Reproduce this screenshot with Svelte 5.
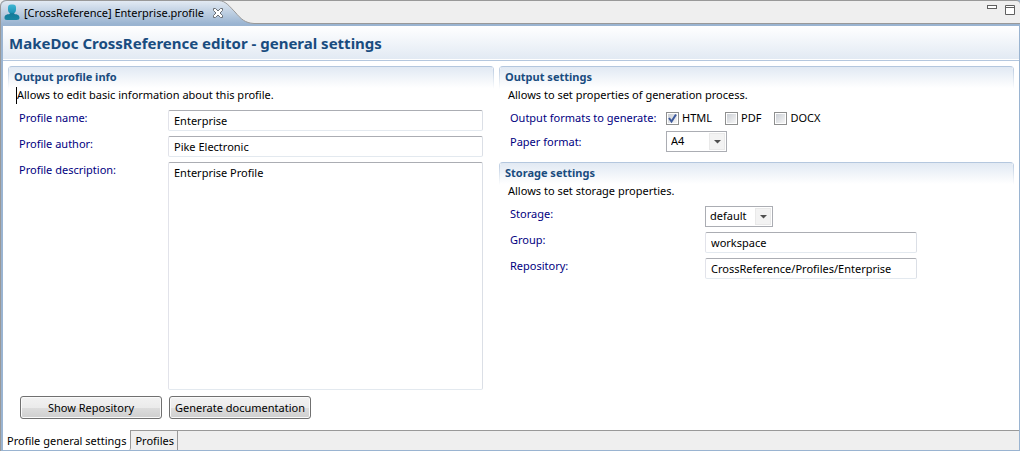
<script>
  let name = $state('Enterprise');
  let author = $state('Pike Electronic');
  let description = $state('Enterprise Profile');
  let formats = $state([
    { label: 'HTML', on: true },
    { label: 'PDF', on: false },
    { label: 'DOCX', on: false }
  ]);
  let paper = $state('A4');
  let storage = $state('default');
  let group = $state('workspace');
  let repository = $state('CrossReference/Profiles/Enterprise');
  const pages = ['Profile general settings', 'Profiles'];
  let page = $state(0);
</script>

<div class="editor">
  <header class="tabbar">
    <div class="tab">
      <svg class="person" width="16" height="17" viewBox="0 0 16 17" aria-hidden="true">
        <defs>
          <linearGradient id="body" x1="0" y1="0" x2="0" y2="1">
            <stop offset="0" stop-color="#3fb6d3" />
            <stop offset="0.5" stop-color="#2097b8" />
            <stop offset="0.6" stop-color="#147b99" />
            <stop offset="1" stop-color="#1a86a3" />
          </linearGradient>
        </defs>
        <path d="M7 0.500H9C11 0.500 12 1.500 12 3.500V5.500C12 7.300 11.300 8.300 10.300 9L10.300 10C12.800 10.300 15.500 11 15.500 13.500C15.500 15.300 14.500 16 12.500 16H3C1 16 0.500 15.300 0.500 13.500C0.500 11 3 10.300 5.700 10L5.700 9C4.700 8.300 4 7.300 4 5.500V3.500C4 1.500 5 0.500 7 0.500Z" fill="url(#body)" />
      </svg>
      <span class="tab-name">[CrossReference] Enterprise.profile</span>
      <button class="icon close" aria-label="Close">
        <svg width="12" height="12" viewBox="0 0 12 12">
          <path d="M1.500 1.500H3.500L6 4L8.500 1.500H10.500V3.500L8 6L10.500 8.500V10.500H8.500L6 8L3.500 10.500H1.500V8.500L4 6L1.500 3.500Z" fill="#fff" stroke="#6b7077" />
        </svg>
      </button>
    </div>
    <svg class="curve" width="48" height="24" viewBox="0 0 48 24" aria-hidden="true">
      <defs>
        <linearGradient id="tabfill" gradientUnits="userSpaceOnUse" x1="0" y1="1" x2="0" y2="24">
          <stop offset="0" stop-color="#e2eaf3" />
          <stop offset="1" stop-color="#9ab4d1" />
        </linearGradient>
      </defs>
      <path d="M0 0.500H11C18 1 22 7 27 12C33 19 37 23 46 23.500H48V24H0Z" fill="url(#tabfill)" />
      <path d="M0 0.500H48" stroke="#999" />
      <path d="M0 0.500H11C18 1 22 7 27 12C33 19 37 23 46 23.500H48" fill="none" stroke="#999" />
    </svg>
    <div class="rest">
      <button class="icon" aria-label="Minimize">
        <svg width="10" height="10" viewBox="0 0 10 10"><rect x="0.500" y="0.500" width="9" height="3" fill="#fff" stroke="#606060" /></svg>
      </button>
      <button class="icon" aria-label="Maximize">
        <svg width="10" height="10" viewBox="0 0 10 10"><path d="M0.500 0.500H9.500V9.500H0.500ZM0.500 2.500H9.500" fill="#fff" stroke="#606060" /></svg>
      </button>
    </div>
  </header>

  <main>
    <h1>MakeDoc CrossReference editor - general settings</h1>
    <div class="columns">
      <section class="left">
        <h2>Output profile info</h2>
        <p class="caret">Allows to edit basic information about this profile.</p>
        <form class="form profile">
          <label for="name">Profile name:</label>
          <input id="name" class="field" bind:value={name} />
          <label for="author">Profile author:</label>
          <input id="author" class="field" bind:value={author} />
          <label for="description">Profile description:</label>
          <textarea id="description" class="field" bind:value={description}></textarea>
          <div class="buttons">
            <button type="button" class="push">Show Repository</button>
            <button type="button" class="push">Generate documentation</button>
          </div>
        </form>
      </section>

      <div class="right">
        <section>
          <h2>Output settings</h2>
          <p>Allows to set properties of generation process.</p>
          <div class="form output">
            <span class="caption" id="formats">Output formats to generate:</span>
            <div class="checks" role="group" aria-labelledby="formats">
              {#each formats as f}
                <label class="check"><input type="checkbox" bind:checked={f.on} />{f.label}</label>
              {/each}
            </div>
            <label for="paper">Paper format:</label>
            <select id="paper" bind:value={paper}>
              <option>A4</option>
              <option>A5</option>
            </select>
          </div>
        </section>
        <section>
          <h2>Storage settings</h2>
          <p>Allows to set storage properties.</p>
          <div class="form storage">
            <label for="storage">Storage:</label>
            <select id="storage" class="wide" bind:value={storage}>
              <option>default</option>
            </select>
            <label for="group">Group:</label>
            <input id="group" class="field" bind:value={group} />
            <label for="repository">Repository:</label>
            <input id="repository" class="field" bind:value={repository} />
          </div>
        </section>
      </div>
    </div>
  </main>

  <nav>
    {#each pages as p, i}
      <button class="page" class:active={page === i} onclick={() => (page = i)}>{p}</button>
    {/each}
  </nav>
</div>

<style>
  :global(body) {
    margin: 0;
    background: #efefef;
  }
  .editor,
  .editor * {
    box-sizing: border-box;
  }
  .editor {
    display: flex;
    flex-direction: column;
    min-height: 100vh;
    border-left: 1px solid #999;
    border-top-left-radius: 6px;
    font: 11px/16px "Noto Sans", "Open Sans", sans-serif;
    color: #000;
    background: #9ab4d1;
  }
  button,
  input,
  select,
  textarea {
    font: inherit;
    color: inherit;
    margin: 0;
  }
  .tabbar {
    display: flex;
    height: 24px;
  }
  .tab {
    display: flex;
    align-items: center;
    padding-left: 3px;
    border-top: 1px solid #999;
    border-top-left-radius: 6px;
    background: linear-gradient(#e2eaf3, #9ab4d1);
  }
  .tab-name {
    margin: 0 8px 0 4px;
    white-space: nowrap;
  }
  .icon {
    display: flex;
    padding: 0;
    border: 0;
    background: none;
  }
  .close {
    position: relative;
    z-index: 1;
  }
  .curve {
    flex: none;
    margin-left: -16px;
    background: #efefef;
  }
  .rest {
    flex: 1;
    display: flex;
    justify-content: flex-end;
    align-items: flex-start;
    gap: 8px;
    padding: 4px 5px 0 0;
    border-top: 1px solid #999;
    border-bottom: 1px solid #999;
    border-top-right-radius: 4px;
    background: #efefef;
  }
  main {
    flex: 1;
    display: flex;
    flex-direction: column;
    margin: 2px 1px 0 2px;
    background: #fff;
  }
  h1 {
    margin: 0;
    padding: 6px;
    font-size: 15px;
    line-height: 22px;
    color: #194c7f;
    background: linear-gradient(#fff, #e1e9f3);
    border-bottom: 1px solid #b4c7de;
    box-shadow: inset 0 -1px #fff;
  }
  .columns {
    flex: 1;
    display: grid;
    grid-template-columns: 486fr 515fr;
    gap: 5px;
    padding: 5px 5px 11px;
  }
  .left {
    display: flex;
    flex-direction: column;
  }
  h2 {
    margin: 0;
    padding: 2px 5px 3px;
    border: 1px solid;
    border-color: #b4c7de transparent transparent;
    border-radius: 4px 4px 0 0;
    font-size: 11px;
    line-height: 16px;
    color: #194c7f;
    background:
      linear-gradient(#b4c7de, #fff) 0 0 / 1px 100% no-repeat border-box,
      linear-gradient(#b4c7de, #fff) 100% 0 / 1px 100% no-repeat border-box,
      linear-gradient(#e1e9f3, #fff) padding-box;
  }
  p {
    margin: -2px 0 0 9px;
    height: 17px;
  }
  .caret {
    margin-left: 8px;
    border-left: 1px solid #000;
  }
  .form {
    display: grid;
    color: #00007f;
  }
  .form > label,
  .caption {
    align-self: start;
    white-space: nowrap;
  }
  .profile {
    flex: 1;
    grid-template-columns: 142px minmax(0, 1fr);
    grid-template-rows: 21px 21px 1fr 24px;
    gap: 5px 7px;
    margin: 6px 11px 0;
  }
  .buttons {
    grid-column: 1 / -1;
    display: flex;
    gap: 7px;
    padding: 1px 0 0 1px;
  }
  .push {
    width: 142px;
    height: 23px;
    padding: 0;
    color: #000;
    border: 1px solid #707070;
    border-radius: 3px;
    background: linear-gradient(#f2f2f2, #ebebeb 50%, #dddddd 50%, #cfcfcf);
    box-shadow: inset 0 0 0 1px #fafafa;
    white-space: nowrap;
  }
  .field {
    width: 100%;
    min-width: 0;
    padding: 1px 5px 0;
    color: #000;
    border: 1px solid;
    border-color: #abadb3 #dbdfe6 #e3e9ef #e2e3ea;
    border-radius: 2px;
    background: #fff;
    outline: 0;
  }
  textarea.field {
    resize: none;
    padding-top: 2px;
  }
  .output {
    grid-template-columns: 149px 1fr;
    grid-template-rows: 16px 21px;
    gap: 5px 7px;
    margin: 6px 11px 10px;
  }
  .output > label {
    padding-top: 3px;
  }
  .checks {
    display: flex;
    gap: 13px;
    color: #000;
  }
  .check {
    display: flex;
    align-items: center;
    gap: 3px;
  }
  .check input {
    appearance: none;
    width: 13px;
    height: 13px;
    border: 1px solid #8e8f8f;
    background: linear-gradient(135deg, #cbcfd5, #f6f6f6) content-box #f4f4f4;
    padding: 1px;
  }
  .check input:checked {
    background: url("data:image/svg+xml,%3Csvg xmlns='http://www.w3.org/2000/svg' viewBox='0 0 11 11'%3E%3Cpath d='M2 5L4.500 8.500L9 1.500' fill='none' stroke='%233d5a9c' stroke-width='2'/%3E%3C/svg%3E") 0 0 / 11px 11px no-repeat padding-box, linear-gradient(135deg, #cbcfd5, #f6f6f6) content-box #f4f4f4;
  }
  select {
    appearance: none;
    width: 61px;
    height: 21px;
    padding: 0 18px 1px 4px;
    color: #000;
    border: 1px solid #abadb3;
    border-radius: 0;
    background: url("data:image/svg+xml,%3Csvg xmlns='http://www.w3.org/2000/svg' viewBox='0 0 17 19'%3E%3Crect x='.5' y='1.500' width='15' height='16' fill='%23f3f3f3' stroke='%23e9e9e9'/%3E%3Cpath d='M5 8H12L8.500 11.500Z' fill='%23505050'/%3E%3C/svg%3E") right center / 17px 19px no-repeat #fff;
  }
  .wide {
    width: 68px;
  }
  .storage {
    grid-template-columns: 188px minmax(0, 212px);
    grid-template-rows: 21px 21px 21px;
    gap: 5px 7px;
    margin: 6px 11px 0;
  }
  nav {
    display: flex;
    height: 20px;
    margin: 0 1px 1px 2px;
    background: #efefef;
    box-shadow: inset 0 1px #999;
  }
  .page {
    padding: 1px 3px 0 4px;
    border: 0;
    border-right: 1px solid #999;
    background: none;
    white-space: nowrap;
  }
  .active {
    padding-right: 4px;
    background: #fff;
    border-bottom-right-radius: 2px;
  }
</style>
